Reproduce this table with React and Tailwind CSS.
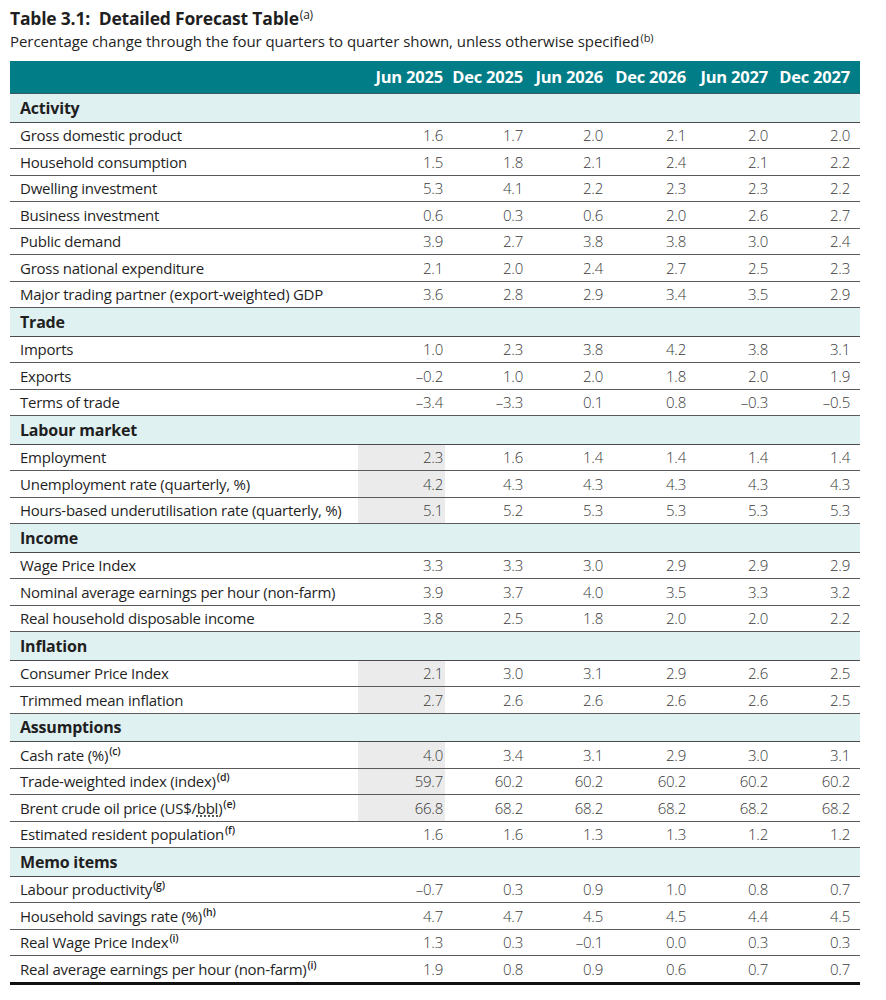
import React from 'react';

const cols = ['Jun 2025', 'Dec 2025', 'Jun 2026', 'Dec 2026', 'Jun 2027', 'Dec 2027'];

// s = shaded first column (published actuals)
const sections = [
  {
    title: 'Activity',
    rows: [
      { label: 'Gross domestic product', v: ['1.6', '1.7', '2.0', '2.1', '2.0', '2.0'] },
      { label: 'Household consumption', v: ['1.5', '1.8', '2.1', '2.4', '2.1', '2.2'] },
      { label: 'Dwelling investment', v: ['5.3', '4.1', '2.2', '2.3', '2.3', '2.2'] },
      { label: 'Business investment', v: ['0.6', '0.3', '0.6', '2.0', '2.6', '2.7'] },
      { label: 'Public demand', v: ['3.9', '2.7', '3.8', '3.8', '3.0', '2.4'] },
      { label: 'Gross national expenditure', v: ['2.1', '2.0', '2.4', '2.7', '2.5', '2.3'] },
      { label: 'Major trading partner (export-weighted) GDP', v: ['3.6', '2.8', '2.9', '3.4', '3.5', '2.9'] },
    ],
  },
  {
    title: 'Trade',
    rows: [
      { label: 'Imports', v: ['1.0', '2.3', '3.8', '4.2', '3.8', '3.1'] },
      { label: 'Exports', v: ['–0.2', '1.0', '2.0', '1.8', '2.0', '1.9'] },
      { label: 'Terms of trade', v: ['–3.4', '–3.3', '0.1', '0.8', '–0.3', '–0.5'] },
    ],
  },
  {
    title: 'Labour market',
    rows: [
      { label: 'Employment', v: ['2.3', '1.6', '1.4', '1.4', '1.4', '1.4'], s: true },
      { label: 'Unemployment rate (quarterly, %)', v: ['4.2', '4.3', '4.3', '4.3', '4.3', '4.3'], s: true },
      { label: 'Hours-based underutilisation rate (quarterly, %)', v: ['5.1', '5.2', '5.3', '5.3', '5.3', '5.3'], s: true },
    ],
  },
  {
    title: 'Income',
    rows: [
      { label: 'Wage Price Index', v: ['3.3', '3.3', '3.0', '2.9', '2.9', '2.9'] },
      { label: 'Nominal average earnings per hour (non-farm)', v: ['3.9', '3.7', '4.0', '3.5', '3.3', '3.2'] },
      { label: 'Real household disposable income', v: ['3.8', '2.5', '1.8', '2.0', '2.0', '2.2'] },
    ],
  },
  {
    title: 'Inflation',
    rows: [
      { label: 'Consumer Price Index', v: ['2.1', '3.0', '3.1', '2.9', '2.6', '2.5'], s: true },
      { label: 'Trimmed mean inflation', v: ['2.7', '2.6', '2.6', '2.6', '2.6', '2.5'], s: true },
    ],
  },
  {
    title: 'Assumptions',
    rows: [
      { label: 'Cash rate (%)', note: 'c', v: ['4.0', '3.4', '3.1', '2.9', '3.0', '3.1'], s: true },
      { label: 'Trade-weighted index (index)', note: 'd', v: ['59.7', '60.2', '60.2', '60.2', '60.2', '60.2'], s: true },
      { label: 'Brent crude oil price', unit: true, note: 'e', v: ['66.8', '68.2', '68.2', '68.2', '68.2', '68.2'], s: true },
      { label: 'Estimated resident population', note: 'f', v: ['1.6', '1.6', '1.3', '1.3', '1.2', '1.2'] },
    ],
  },
  {
    title: 'Memo items',
    rows: [
      { label: 'Labour productivity', note: 'g', v: ['–0.7', '0.3', '0.9', '1.0', '0.8', '0.7'] },
      { label: 'Household savings rate (%)', note: 'h', v: ['4.7', '4.7', '4.5', '4.5', '4.4', '4.5'] },
      { label: 'Real Wage Price Index', note: 'i', v: ['1.3', '0.3', '–0.1', '0.0', '0.3', '0.3'] },
      { label: 'Real average earnings per hour (non-farm)', note: 'i', v: ['1.9', '0.8', '0.9', '0.6', '0.7', '0.7'] },
    ],
  },
];

const grid = 'grid grid-cols-[348px_87px_80px_80px_83px_82px_82px_8px]';

function Note({ children }) {
  return <sup className="text-[10.5px] font-semibold ml-[1px] top-[-6px]">({children})</sup>;
}

export default function App() {
  return (
    <div className="w-[886px] h-[1000px] bg-white px-[10px] pt-[6px] font-['Open_Sans',sans-serif] text-[#1f1f1f]">
      <div className="text-[17.5px] font-bold leading-[24px] tracking-[-0.2px]">
        Table 3.1:&nbsp; Detailed Forecast Table
        <sup className="text-[12px] font-normal ml-[1px] top-[-6px]">(a)</sup>
      </div>
      <div className="text-[15px] leading-[20px] tracking-[-0.05px] mt-[1px]">
        Percentage change through the four quarters to quarter shown, unless otherwise specified
        <sup className="text-[11px] ml-[1px] top-[-5px]">(b)</sup>
      </div>

      <div className="w-[850px] mt-[10px]">
        <div className={`${grid} h-[33px] items-center bg-[#007d87] text-white font-bold text-[16.5px] tracking-[-0.2px] border-b border-[#3d5a5c]`}>
          <div />
          {cols.map((c) => (
            <div key={c} className="text-right pr-[2px]">{c}</div>
          ))}
          <div />
        </div>

        {sections.map((sec) => (
          <div key={sec.title}>
            <div className="h-[28.5px] flex items-center bg-[#dff1f1] px-[10px] text-[16px] font-bold tracking-[-0.2px] border-b border-[#4a4a4a]">
              {sec.title}
            </div>
            {sec.rows.map((r) => (
              <div
                key={r.label}
                className={`${grid} h-[26.5px] text-[15px] tracking-[-0.25px] border-b border-[#5a5a5a]`}
              >
                <div className="pl-[10px] flex items-center whitespace-nowrap">
                  <span>
                    {r.label}
                    {r.unit && (
                      <>
                        {' '}(US$/<span className="underline decoration-dotted underline-offset-2">bbl</span>)
                      </>
                    )}
                    {r.note && <Note>{r.note}</Note>}
                  </span>
                </div>
                {r.v.map((val, j) => (
                  <div
                    key={j}
                    className={`flex items-center justify-end pr-[2px] font-light text-[#3a3a3a] ${
                      j === 0 && r.s ? 'bg-[#ebebeb]' : ''
                    }`}
                  >
                    {val}
                  </div>
                ))}
                <div />
              </div>
            ))}
          </div>
        ))}
        <div className="h-[3px] bg-[#111] -mt-[1px]" />
      </div>
    </div>
  );
}
